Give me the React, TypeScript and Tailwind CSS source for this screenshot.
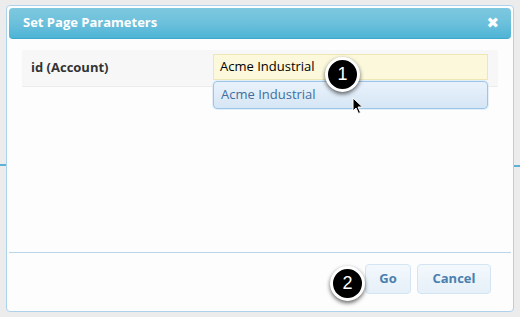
import React from "react";

const font = { fontFamily: '"Open Sans", "DejaVu Sans", sans-serif' };

function Callout({ n, className }: { n: string; className: string }) {
  return (
    <div
      className={`absolute flex h-[35px] w-[35px] items-center justify-center rounded-full border-[3px] border-white bg-black text-[18px] text-white shadow-[0_2px_4px_rgba(0,0,0,0.6)] ${className}`}
      style={{ fontFamily: '"Liberation Sans", Arial, sans-serif' }}
    >
      {n}
    </div>
  );
}

export default function App() {
  return (
    <div
      className="relative h-[317px] w-[520px] overflow-hidden bg-[#ececec] pl-[6px] pt-[5px]"
      style={font}
    >
      <div className="absolute right-0 top-[165px] h-[2px] w-[6px] bg-[#5fb0d6]" />
      <div className="absolute left-0 top-[164px] h-[2px] w-[6px] bg-[#5fb0d6]" />
      <div className="relative flex h-[307px] w-[508px] flex-col rounded-[4px] border border-[#acd2ec] bg-[#fdfdfd] p-[2px]">
        {/* header */}
        <div className="flex h-[31px] items-center justify-between rounded-[4px] border-b border-[#3fa8ca] bg-gradient-to-b from-[#7ec8df] via-[#6cc0dc] to-[#4db4d6] pl-[14px] pr-[12px]">
          <span className="text-[13px] font-bold text-white">Set Page Parameters</span>
          <span className="text-[15px] font-bold leading-none text-white" style={{ fontFamily: '"DejaVu Sans", sans-serif' }}>✖</span>
        </div>
        {/* body */}
        <div className="flex-1 pl-[13px] pr-[13px] pt-[11px]">
          <div className="relative flex h-[37px] items-start border-b border-[#ececec] bg-[#f7f7f7]">
            <div className="w-[191px] pl-[9px] pt-[8px] text-[13px] font-bold text-[#333]">
              id (Account)
            </div>
            <div className="mt-[4px] flex h-[26px] w-[275px] items-center border border-[#eee7b5] bg-[#fbf8dc] pl-[6px] text-[13px] text-black">
              Acme Industrial
            </div>
            <div className="absolute left-[191px] top-[31px] flex h-[28px] w-[275px] items-center rounded-[4px] border border-[#9cc6e8] bg-gradient-to-b from-[#e9f2fb] to-[#d6e6f5] pl-[7px] text-[13px] text-[#3f6f9d] shadow-[0_0_0_1px_#e3eef8]">
              Acme Industrial
            </div>
          </div>
        </div>
        {/* footer */}
        <div className="flex h-[57px] justify-end gap-[6px] border-t border-[#b7d6ec] pr-[20px] pt-[11px]">
          <button className="h-[30px] w-[46px] rounded-[4px] border border-[#d3e5f3] bg-gradient-to-b from-[#f3f8fc] to-[#e6f0f9] text-[13px] font-bold text-[#4a7fae]">
            Go
          </button>
          <button className="h-[30px] w-[74px] rounded-[4px] border border-[#d3e5f3] bg-gradient-to-b from-[#f3f8fc] to-[#e6f0f9] text-[13px] font-bold text-[#4a7fae]">
            Cancel
          </button>
        </div>
      </div>
      <Callout n="1" className="left-[325px] top-[57px]" />
      <Callout n="2" className="left-[330px] top-[266px]" />
      <svg className="absolute left-[352px] top-[97px]" width="12" height="18" viewBox="0 0 12 18">
        <path d="M1 1 L1 14 L4 11 L6.5 16.5 L8.5 15.5 L6 10 L10.5 10 Z" fill="black" stroke="white" strokeWidth="1" />
      </svg>
    </div>
  );
}
